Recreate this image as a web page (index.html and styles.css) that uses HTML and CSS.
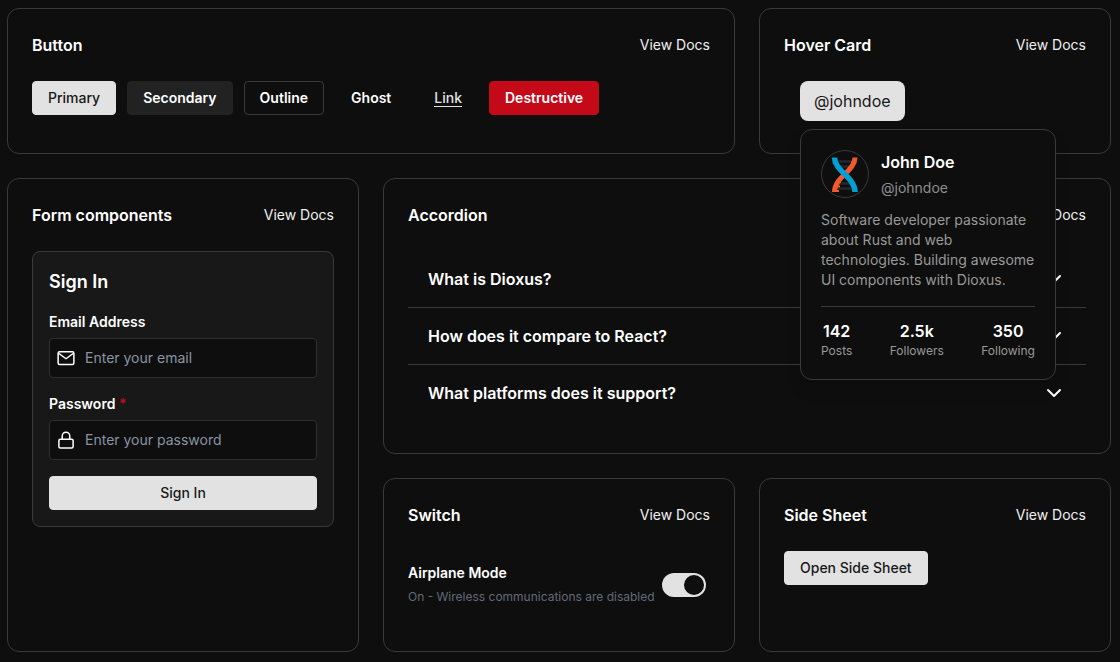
FILE: index.html
```html
<!DOCTYPE html>
<html lang="en">
<head>
<meta charset="utf-8">
<meta name="viewport" content="width=device-width, initial-scale=1">
<title>Component Gallery</title>
<link rel="stylesheet" href="styles.css">
</head>
<body>
<main class="gallery">
  <section class="card card-wide">
    <header class="card-head"><h2 class="card-title">Button</h2><a class="docs" href="#button">View Docs</a></header>
    <div class="button-row">
      <button class="btn btn-primary" type="button">Primary</button>
      <button class="btn btn-secondary" type="button">Secondary</button>
      <button class="btn btn-outline" type="button">Outline</button>
      <button class="btn btn-ghost" type="button">Ghost</button>
      <a class="btn btn-link" href="#link"><span class="link-text">Link</span></a>
      <button class="btn btn-destructive" type="button">Destructive</button>
    </div>
  </section>

  <section class="card">
    <header class="card-head"><h2 class="card-title">Hover Card</h2><a class="docs" href="#hover-card">View Docs</a></header>
    <div class="hover-wrap">
      <button class="hover-trigger" type="button">@johndoe</button>
      <div class="hover-card">
        <div class="profile">
          <svg class="avatar" viewBox="0 0 48 48" aria-hidden="true">
            <circle cx="24" cy="24" r="23.5" fill="none" stroke="#3a3a3a"/>
            <path d="M16 11.5H33M18 16.5H30M18 33.5H30M15 38.5H32" stroke="#23272f" stroke-width="2.4"/>
            <path d="M34 7.5C34 21 13.5 27 13.500 42" fill="none" stroke="#f1582c" stroke-width="5"/>
            <path d="M30 12.500h3M28 17h3M15.500 32h4.500M15 36.500h4M14 41h4" stroke="#f1582c" stroke-width="2"/>
            <path d="M13.500 7.500C13.500 21 34 27 34 42" fill="none" stroke="#00a0d2" stroke-width="5.500"/>
          </svg>
          <div class="profile-id">
            <h3 class="profile-name">John Doe</h3>
            <p class="profile-handle">@johndoe</p>
          </div>
        </div>
        <p class="bio">Software developer passionate about Rust and web technologies. Building awesome UI components with Dioxus.</p>
        <div class="stats">
          <div class="stat"><strong class="stat-value">142</strong><span class="stat-label">Posts</span></div>
          <div class="stat"><strong class="stat-value">2.5k</strong><span class="stat-label">Followers</span></div>
          <div class="stat"><strong class="stat-value">350</strong><span class="stat-label">Following</span></div>
        </div>
      </div>
    </div>
  </section>

  <section class="card card-tall">
    <header class="card-head"><h2 class="card-title">Form components</h2><a class="docs" href="#form">View Docs</a></header>
    <form class="signin">
      <h3 class="signin-title">Sign In</h3>
      <div class="field">
        <label class="field-label" for="email">Email Address</label>
        <div class="input-box">
          <svg class="icon" viewBox="0 0 24 24" aria-hidden="true"><rect x="1.500" y="3.500" width="21" height="17" rx="2"/><path d="M2.500 6 12 13l9.500-7"/></svg>
          <input class="input" id="email" type="email" placeholder="Enter your email">
        </div>
      </div>
      <div class="field">
        <label class="field-label" for="password">Password <span class="required">*</span></label>
        <div class="input-box">
          <svg class="icon" viewBox="0 0 24 24" aria-hidden="true"><rect x="2.500" y="11" width="19" height="11.500" rx="2"/><path d="M7 11V6.500a5 5 0 0 1 10 0V11"/></svg>
          <input class="input" id="password" type="password" placeholder="Enter your password">
        </div>
      </div>
      <button class="btn btn-primary btn-block" type="button">Sign In</button>
    </form>
  </section>

  <section class="card card-wide">
    <header class="card-head"><h2 class="card-title">Accordion</h2><a class="docs" href="#accordion">View Docs</a></header>
    <div class="accordion">
      <button class="accordion-item" type="button">What is Dioxus?<svg class="chevron" viewBox="0 0 24 24" aria-hidden="true"><path d="m6 9 6 6 6-6"/></svg></button>
      <button class="accordion-item" type="button">How does it compare to React?<svg class="chevron" viewBox="0 0 24 24" aria-hidden="true"><path d="m6 9 6 6 6-6"/></svg></button>
      <button class="accordion-item" type="button">What platforms does it support?<svg class="chevron" viewBox="0 0 24 24" aria-hidden="true"><path d="m6 9 6 6 6-6"/></svg></button>
    </div>
  </section>

  <section class="card">
    <header class="card-head"><h2 class="card-title">Switch</h2><a class="docs" href="#switch">View Docs</a></header>
    <div class="switch-row">
      <div class="switch-text">
        <label class="switch-label" for="airplane">Airplane Mode</label>
        <p class="switch-note">On - Wireless communications are disabled</p>
      </div>
      <input class="switch" id="airplane" type="checkbox" role="switch" checked>
    </div>
  </section>

  <section class="card">
    <header class="card-head"><h2 class="card-title">Side Sheet</h2><a class="docs" href="#side-sheet">View Docs</a></header>
    <button class="btn btn-primary" type="button">Open Side Sheet</button>
  </section>
</main>
</body>
</html>
```

FILE: styles.css
```css
* { box-sizing: border-box; }

body {
  margin: 0;
  background: #0e0e0e;
  color: #fff;
  font-family: Inter, "Liberation Sans", sans-serif;
  font-size: 16px;
  line-height: 24px;
}

h2, h3, p { margin: 0; }
button, input { font: inherit; color: inherit; }
button { cursor: pointer; }

.gallery {
  display: grid;
  grid-template-columns: repeat(3, minmax(0, 1fr));
  gap: 24px;
  padding: 8px 9px 8px 7px;
}

.card {
  padding: 24px 24px 32px;
  border: 1px solid #3a3a3a;
  border-radius: 12px;
}
.card-wide { grid-column: span 2; }
.card-tall { grid-row: span 2; }

.card-head {
  display: flex;
  align-items: center;
  justify-content: space-between;
  margin-bottom: 24px;
}
.card-title { font-size: 16px; font-weight: 600; }
.docs { font-size: 14px; font-weight: 400; color: #f0f0f0; text-decoration: none; }

.button-row { display: flex; gap: 11px; }
.btn {
  padding: 6px 15px;
  border: 1px solid transparent;
  border-radius: 4px;
  background: transparent;
  font-size: 14px;
  font-weight: 600;
  line-height: 20px;
  text-decoration: none;
}
.btn-primary { background: #e2e2e2; border-color: #e2e2e2; color: #181818; font-weight: 500; }
.btn-secondary { background: #222; border-color: #222; }
.btn-outline { border-color: #3a3a3a; }
.btn-link { color: #e2e2e2; font-weight: 500; }
.link-text { border-bottom: 1px solid currentColor; }
.btn-destructive { background: #c40a18; border-color: #c40a18; }
.btn-block { width: 100%; }

.hover-wrap { position: relative; padding: 0 16px; }
.hover-trigger {
  display: block;
  padding: 8px 14px;
  border: 0;
  border-radius: 8px;
  background: #e2e2e2;
  color: #181818;
}
.hover-card {
  position: absolute;
  z-index: 2;
  top: 48px;
  left: 16px;
  width: 256px;
  padding: 20px;
  border: 1px solid #3a3a3a;
  border-radius: 12px;
  background: #0e0e0e;
  box-shadow: 0 10px 15px rgba(0, 0, 0, 0.1);
}
.profile { display: flex; align-items: center; gap: 12px; margin-bottom: 12px; }
.avatar { width: 48px; height: 48px; flex: none; }
.profile-name { font-size: 16px; font-weight: 600; line-height: 24px; }
.profile-handle { margin-top: 4px; font-size: 14px; line-height: 20px; color: #8e8e8e; }
.profile-id { height: 48px; }
.bio { font-size: 14px; line-height: 20px; color: #999; }
.stats {
  display: flex;
  justify-content: space-between;
  margin-top: 16px;
  padding-top: 14px;
  border-top: 1px solid #3a3a3a;
}
.stat { display: flex; flex-direction: column; align-items: center; gap: 2px; }
.stat-value { font-weight: 600; line-height: 20px; }
.stat-label { font-size: 12px; line-height: 16px; color: #999; }

.signin {
  display: flex;
  flex-direction: column;
  gap: 16px;
  padding: 16px;
  border: 1px solid #3a3a3a;
  border-radius: 8px;
  background: #181818;
}
.signin-title { font-size: 18px; font-weight: 600; line-height: 28px; }
.field-label { display: block; margin-bottom: 6px; font-size: 14px; font-weight: 600; line-height: 20px; }
.required { color: #c40a18; }
.input-box {
  display: flex;
  align-items: center;
  gap: 10px;
  height: 40px;
  padding: 0 7px;
  border: 1px solid #2e2e2e;
  border-radius: 4px;
  background: #0e0e0e;
}
.icon, .chevron { flex: none; fill: none; stroke: #fff; stroke-width: 2; stroke-linecap: round; stroke-linejoin: round; }
.icon { width: 18px; height: 18px; }
.input {
  flex: 1;
  min-width: 0;
  padding: 0;
  border: 0;
  outline: 0;
  background: transparent;
  font-size: 14px;
  line-height: 20px;
}
.input::placeholder { color: #8b93a3; opacity: 1; }

.accordion { display: flex; flex-direction: column; }
.accordion-item {
  display: flex;
  align-items: center;
  justify-content: space-between;
  padding: 16px 20px;
  border: 0;
  border-bottom: 1px solid #3a3a3a;
  background: transparent;
  font-weight: 600;
  text-align: left;
}
.accordion-item:last-child { border-bottom: 0; }
.chevron { width: 24px; height: 24px; }

.switch-row { display: flex; align-items: center; justify-content: space-between; padding: 12px 4px 12px 0; }
.switch-label { display: block; font-size: 14px; font-weight: 600; line-height: 20px; }
.switch-note { margin-top: 4px; font-size: 12px; line-height: 20px; color: #636a79; white-space: nowrap; }
.switch {
  appearance: none;
  display: flex;
  flex: none;
  justify-content: flex-end;
  width: 44px;
  height: 24px;
  margin: 0;
  padding: 2px;
  border-radius: 12px;
  background: #e2e2e2;
}
.switch::before { content: ""; width: 20px; height: 20px; border-radius: 50%; background: #0e0e0e; }
```
